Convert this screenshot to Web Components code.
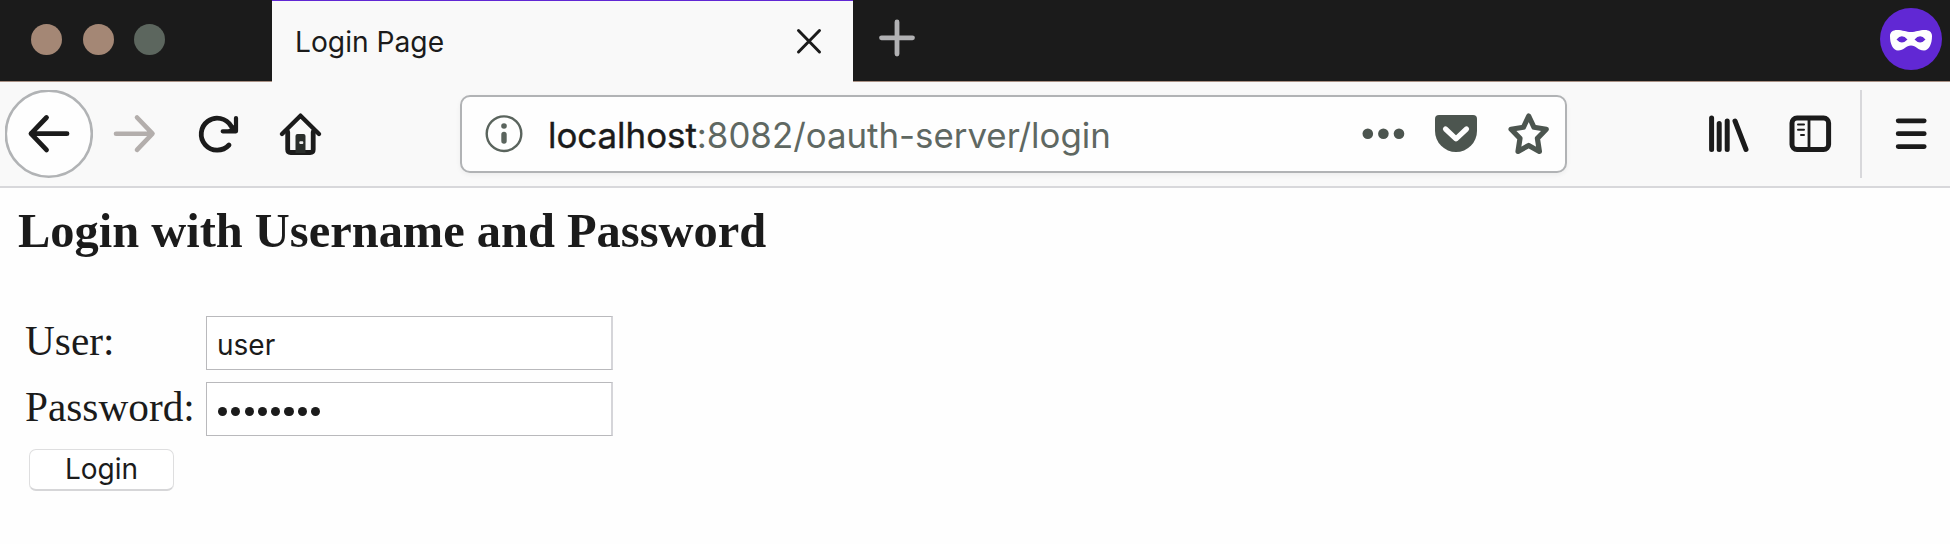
<!DOCTYPE html>
<html lang="en">
<head>
<meta charset="utf-8">
<title>Login Page</title>
<style>
body { margin: 0; background: #fefefe; color: #1b1b1b; font-family: Inter, "Liberation Sans", sans-serif; overflow: hidden; }
</style>
</head>
<body>
<browser-window></browser-window>
<script>
const define = (name, html, setup) => customElements.define(name, class extends HTMLElement {
  constructor() {
    super();
    this.attachShadow({ mode: 'open' }).innerHTML = html;
  }
  connectedCallback() { if (setup) setup(this, this.shadowRoot); }
});

const icons = {
  back: ['5 90 88 88', '<circle cx="48.8" cy="133.7" r="43" fill="#fefefe" stroke="#b1b3b5" stroke-width="2.6"/><path d="M67 133.7H31M46.5 117.5L31 133.7l15.500 16.200" stroke-width="4.800"/>'],
  forward: ['110 109 50 50', '<path d="M116 133.700h36M137 117.500l15.500 16.200L137 149.900" stroke="#b3aeac" stroke-width="4.600"/>'],
  reload: ['194 109 50 50', '<path d="M229 145A16 16 0 1 1 231 126" stroke-width="4.800"/><path d="M236 118v13.300h-13.300" stroke-width="4.200"/><path d="M228 130l8-7v8z" fill="#1b1b1b" stroke="none"/>'],
  home: ['275 109 50 50', '<path d="M282 134l18.500-18.300L319 134" stroke-width="4.400"/><path d="M287.700 132v17.500q0 3 3 3h19.500q3 0 3-3V132" stroke-width="4.800"/><path d="M295.500 153v-17q0-2 2-2h6q2 0 2 2v17z" fill="#2a2e2b" stroke="none"/><rect x="299.300" y="141.300" width="4" height="2.600" rx="1" fill="#eee" stroke="none"/>'],
  info: ['484 109 40 50', '<circle cx="504" cy="133.700" r="17.300" stroke="#5a645d" stroke-width="2.400"/><path d="M504 134.500v6.500" stroke="#5a645d" stroke-width="5.400"/><circle cx="504" cy="126" r="2.800" fill="#5a645d" stroke="none"/>'],
  more: ['1358 109 50 50', '<g fill="#4c554f" stroke="none"><circle cx="1367.800" cy="133.700" r="5.300"/><circle cx="1383.400" cy="133.700" r="5.300"/><circle cx="1399" cy="133.700" r="5.300"/></g>'],
  pocket: ['1431 109 50 50', '<path d="M1439 115h34q4 0 4 4v12a21 21 0 0 1-42 0v-12q0-4 4-4z" fill="#4c554f" stroke="none"/><path d="M1445.500 129l10.500 9.800 10.500-9.800" stroke="#fefefe" stroke-width="5.200"/>'],
  star: ['1504 109 50 50', '<path d="M1528.700 116l5.300 11.300 12.300 1.900-8.900 9.200 2 13-10.700-6-10.700 6 2-13-8.900-9.200 12.300-1.900z" stroke="#4c554f" stroke-width="5.200"/>'],
  library: ['1704 109 50 50', '<path d="M1711.600 118v31.500M1719.200 123.500v26M1727.200 121v28.500M1735 121l11 28.500" stroke-width="5"/>'],
  sidebar: ['1785 109 50 50', '<rect x="1792" y="118" width="36.600" height="31.500" rx="5" stroke-width="5"/><path d="M1809 118v31" stroke-width="2.800"/><path d="M1798 124.500h6M1798 129.700h6M1801 135h3" stroke-width="2"/>'],
  menu: ['1887 109 50 50', '<path d="M1898.200 120.800h26M1898.200 133.700h26M1898.200 146.600h26" stroke-width="4.800"/>'],
  close: ['795 26 28 28', '<path d="M798.500 29.500l21 21.500M819.500 29.500l-21 21.500" stroke-width="3"/>'],
  plus: ['877 18 40 40', '<path d="M897 22v32M881.500 37.800h31" stroke="#b1b1b3" stroke-width="4.800"/>'],
  mask: ['1879 7 64 64', '<circle cx="1911" cy="39" r="31" fill="#6128d4" stroke="none"/><path fill="#fefefe" stroke="none" fill-rule="evenodd" d="M1890 36c0-4 3-6 7-6 6 0 9 2 14 2s8-2 14-2c4 0 7 2 7 6 0 8-3 14.500-8 14.500-6 0-8-5-13-5s-7 5-13 5c-5 0-8-6.500-8-14.500zM1896.500 39.500q5.300-6.500 11 0-5.700 6-11 0zM1914.500 39.500q5.700-6.500 11 0-5.300 6-11 0z"/>']
};
define('ui-icon', '<style>:host{display:block;flex:none}svg{display:block;fill:none;stroke:#1b1b1b;stroke-linecap:round;stroke-linejoin:round}</style><svg aria-hidden="true"></svg>', (el, root) => {
  const [box, art] = icons[el.getAttribute('name')];
  const svg = root.querySelector('svg');
  const [, , w, h] = box.split(' ');
  svg.setAttribute('viewBox', box);
  svg.setAttribute('width', w);
  svg.setAttribute('height', h);
  svg.innerHTML = art;
});

define('window-controls', `<style>
:host{display:flex;align-items:center;gap:20.500px;padding-left:31px;width:241px;height:78px}
i{width:31px;height:31px;border-radius:50%;background:#a48775}
i:last-child{background:#5c665e}
</style><i></i><i></i><i></i>`);

define('browser-tab', `<style>
:host{display:flex;align-items:center;justify-content:space-between;box-sizing:border-box;width:581px;height:82px;padding:0 30px 1px 23px;border-top:1px solid #6128d4;background:#f9f9f9}
span{font-size:28.200px;line-height:34px;white-space:nowrap;padding-top:1px}
</style><span><slot></slot></span><ui-icon name="close"></ui-icon>`);

define('tab-strip', `<style>
:host{display:flex;height:82px;background:linear-gradient(#1b1b1b 81px,#a99184 81px)}
.plus{margin:18px 0 0 24px}.mask{margin:7px 7px 0 auto}
</style><window-controls></window-controls><slot></slot><ui-icon class="plus" name="plus"></ui-icon><ui-icon class="mask" name="mask"></ui-icon>`);

define('address-bar', `<style>
:host{display:flex;align-items:center;box-sizing:border-box;width:1107px;height:78px;border:2px solid #b1b3b5;border-radius:10px;background:#fefefe;padding:0 11px 0 22px;box-shadow:0 2px 5px #0000000d}
p{margin:0 auto 0 24px;font-size:34.850px;line-height:44px;padding-top:1px;color:#5f6862;white-space:nowrap}
b{font-weight:400;color:#1b1b1b;-webkit-text-stroke:.4px #1b1b1b}
.pocket,.star{margin-left:23px}
</style><ui-icon name="info"></ui-icon><p><b><slot name="host"></slot></b><slot></slot></p><ui-icon name="more"></ui-icon><ui-icon class="pocket" name="pocket"></ui-icon><ui-icon class="star" name="star"></ui-icon>`);

define('nav-bar', `<style>
:host{display:flex;align-items:center;box-sizing:border-box;height:106px;padding-left:5px;background:#f9f9f9;border-bottom:2px solid #d8d8db}
.fwd{margin-left:17px}.reload{margin-left:34px}.home{margin-left:31px}
address-bar{margin:0 137px 0 135px}
.side{margin-left:31px}
hr{border:0;margin:0 25px 0 25px;width:2px;height:88px;background:#d8d8db}
</style><ui-icon name="back"></ui-icon><ui-icon class="fwd" name="forward"></ui-icon><ui-icon class="reload" name="reload"></ui-icon><ui-icon class="home" name="home"></ui-icon>
<address-bar><span slot="host">localhost</span>:8082/oauth-server/login</address-bar>
<ui-icon name="library"></ui-icon><ui-icon class="side" name="sidebar"></ui-icon><hr><ui-icon name="menu"></ui-icon>`);

define('form-field', `<style>
:host{display:grid;grid-template-columns:180px 407px;align-items:start;height:54px}
label{font:41.300px/46px "Liberation Serif",serif;white-space:nowrap;padding-top:2px;margin-left:-1px}
div{box-sizing:border-box;height:54px;border:1px solid #b9b9bc;border-right:2px solid #d5d5d9;background:#fff;padding:11px 0 0 10px;font-size:28px;line-height:34px}
</style><label><slot name="label"></slot></label><div><slot></slot></div>`);

define('password-dots', `<style>
:host{display:flex;gap:4.200px;padding:13px 0 0 1px}
i{width:9.100px;height:9.100px;border-radius:50%;background:#1b1b1b}
</style>` + '<i></i>'.repeat(8));

define('push-button', `<style>
:host{display:block;width:145px}
button{display:block;box-sizing:border-box;width:145px;height:42px;border:1px solid #dededf;border-bottom:2px solid #d6d6d8;border-radius:7px;background:#fff;color:inherit;font:28px/34px Inter,sans-serif;padding:0 0 1px}
</style><button><slot></slot></button>`);

define('login-form', `<style>
:host{display:block;padding:16px 0 0 18px}
h3{margin:0;font:bold 48.450px/54px "Liberation Serif",serif;white-space:nowrap}
form{display:grid;gap:12px;padding:58px 0 0 8px}
push-button{margin:1px 0 0 3px}
</style><h3>Login with Username and Password</h3>
<form><form-field><span slot="label">User:</span>user</form-field>
<form-field><span slot="label">Password:</span><password-dots></password-dots></form-field>
<push-button>Login</push-button></form>`);

define('browser-window', `<style>:host{display:block;width:1950px;height:544px;overflow:hidden}</style>
<tab-strip><browser-tab>Login Page</browser-tab></tab-strip><nav-bar></nav-bar><login-form></login-form>`);
</script>
</body>
</html>
